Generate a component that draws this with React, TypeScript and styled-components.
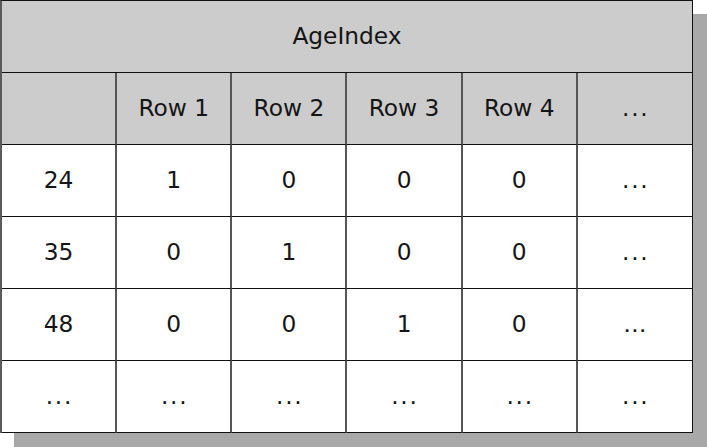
import React from "react";
import styled, { createGlobalStyle } from "styled-components";

const Global = createGlobalStyle`
  html, body { margin: 0; padding: 0; background: #ffffff; }
  body { font-family: "DejaVu Sans", Verdana, sans-serif; min-height: 447px; }
`;

const Page = styled.div`
  width: 707px;
  height: 447px;
  box-sizing: border-box;
  padding: 0 14px 14px 0;
`;

const Frame = styled.div`
  width: 693px;
  box-sizing: border-box;
  box-shadow: 14px 14px 0 #a8a8a8;
  background: #ffffff;
`;

const Grid = styled.div`
  display: grid;
  grid-template-columns: repeat(6, 1fr);
  grid-auto-rows: 72px;
  border-top: 1px solid #111;
  border-left: 2px solid #5a5a5a;
  box-sizing: border-box;
  width: 693px;
`;

const Cell = styled.div<{ $head?: boolean; $span?: number; $last?: boolean }>`
  grid-column: span ${(p) => p.$span ?? 1};
  display: flex;
  align-items: center;
  justify-content: center;
  box-sizing: border-box;
  border-right: ${(p) => (p.$last ? "1px solid #111" : "2px solid #555")};
  border-bottom: 1px solid #111;
  background: ${(p) => (p.$head ? "#cccccc" : "#ffffff")};
  color: #151515;
  font-size: 23.3px;
  font-family: "DejaVu Sans", Verdana, sans-serif;
  padding-bottom: 3px;
`;

const Dots = styled.span<{ $tight?: boolean }>`
  letter-spacing: ${(p) => (p.$tight ? "0" : "1.7px")};
  margin-right: ${(p) => (p.$tight ? "0" : "-1.7px")};
`;

const headers = ["", "Row 1", "Row 2", "Row 3", "Row 4"];
const rows: string[][] = [
  ["24", "1", "0", "0", "0"],
  ["35", "0", "1", "0", "0"],
  ["48", "0", "0", "1", "0"],
];

export default function App() {
  return (
    <>
      <Global />
      <Page>
        <Frame>
          <Grid>
            <Cell $head $span={6} $last>AgeIndex</Cell>
            {headers.map((h, i) => (
              <Cell $head key={"h" + i}>{h}</Cell>
            ))}
            <Cell $head $last><Dots>...</Dots></Cell>
            {rows.map((r, ri) => (
              <React.Fragment key={ri}>
                {r.map((v, ci) => (
                  <Cell key={ci}>{v}</Cell>
                ))}
                <Cell $last>
                  {ri === 2 ? <Dots $tight>…</Dots> : <Dots>...</Dots>}
                </Cell>
              </React.Fragment>
            ))}
            {Array.from({ length: 6 }).map((_, i) => (
              <Cell key={"e" + i} $last={i === 5}><Dots>...</Dots></Cell>
            ))}
          </Grid>
        </Frame>
      </Page>
    </>
  );
}
